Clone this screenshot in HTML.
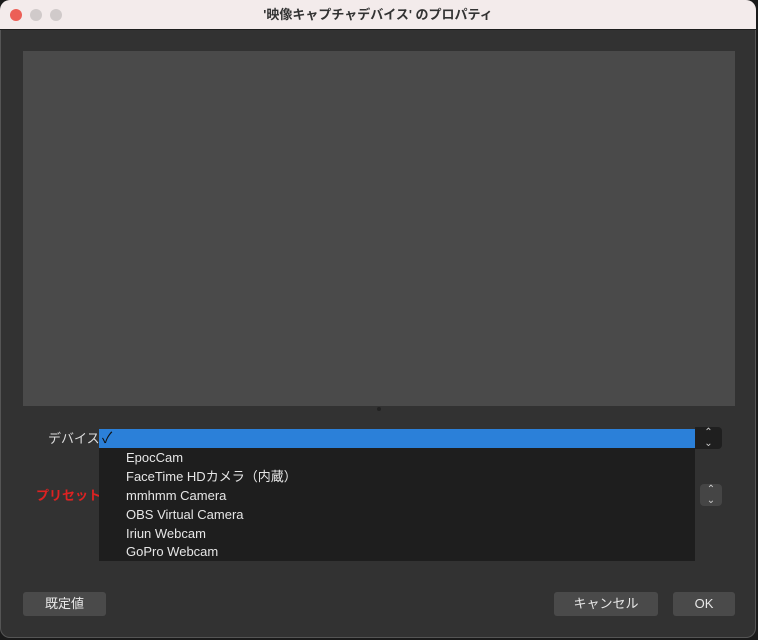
<!DOCTYPE html><html><head><style>
body{margin:0;width:758px;height:640px;background:#1a1a1a;font-family:"Liberation Sans","Noto Sans CJK JP",sans-serif;overflow:hidden;position:relative}
.win{position:absolute;left:0;top:0;width:756px;height:638px;background:#323232;border-radius:10px;overflow:hidden;box-shadow:inset 0 0 0 1px #555}
.tb{position:absolute;left:0;top:0;right:0;height:29px;background:#f3ebeb;border-bottom:1px solid #1e1e1e;text-align:center;font-size:13px;font-weight:bold;line-height:29px;color:#333}
.d{position:absolute;top:9px;width:12px;height:12px;border-radius:50%;background:#d0caca}
.a{position:absolute}
.btn{position:absolute;background:#4a4a4a;border-radius:3px;color:#e8e8e8;font-size:13px;text-align:center;line-height:24px;height:24px}
.it{position:absolute;left:126px;color:#e6e6e6;font-size:13px;line-height:19px;height:19px}
</style></head><body><div class="win">
<div class="tb">'映像キャプチャデバイス' のプロパティ
<div class="d" style="left:10px;background:#ec5f57"></div><div class="d" style="left:30px"></div><div class="d" style="left:50px"></div></div>
<div class="a" style="left:23px;top:51px;width:712px;height:355px;background:#4a4a4a"></div>
<div class="a" style="left:377px;top:407px;width:4px;height:4px;border-radius:50%;background:#222"></div>
<div class="a" style="left:48px;top:429px;color:#ddd;font-size:13px;line-height:19px">デバイス</div>
<div class="a" style="left:36px;top:486px;color:#d22;font-size:13px;font-weight:bold;line-height:19px">プリセット</div>
<div class="a" style="left:695px;top:427px;width:27px;height:22px;background:#1f1f1f;border-radius:0 4px 4px 0;color:#ccc;font-size:10px;text-align:center;line-height:11px">⌃<br>⌄</div>
<div class="a" style="left:700px;top:484px;width:22px;height:22px;background:#454545;border-radius:4px;color:#ccc;font-size:10px;text-align:center;line-height:11px">⌃<br>⌄</div>
<div class="a" style="left:99px;top:429px;width:596px;height:19px;background:#2b80d9;color:#111;font-size:15px;line-height:19px;padding-left:3px;box-sizing:border-box">✓</div>
<div class="a" style="left:99px;top:448px;width:596px;height:113px;background:#1e1e1e"></div>
<div class="it" style="top:448px">EpocCam</div>
<div class="it" style="top:467px">FaceTime HDカメラ（内蔵）</div>
<div class="it" style="top:486px">mmhmm Camera</div>
<div class="it" style="top:505px">OBS Virtual Camera</div>
<div class="it" style="top:524px">Iriun Webcam</div>
<div class="it" style="top:542px">GoPro Webcam</div>
<div class="btn" style="left:23px;top:592px;width:83px">既定値</div>
<div class="btn" style="left:554px;top:592px;width:104px">キャンセル</div>
<div class="btn" style="left:673px;top:592px;width:62px">OK</div>
</div></body></html>
